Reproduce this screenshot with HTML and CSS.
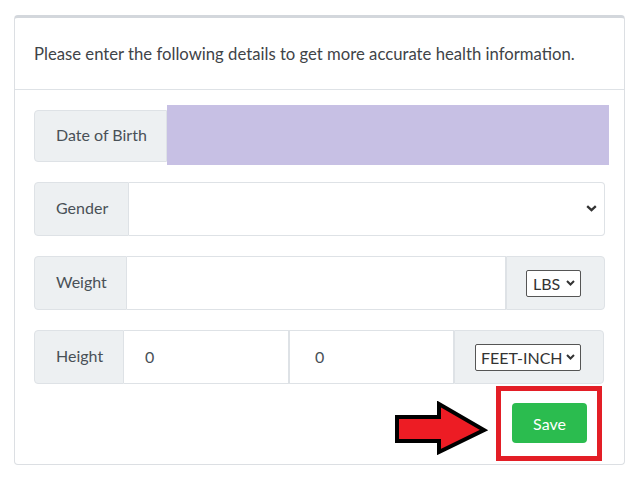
FILE: index.html
```html
<!DOCTYPE html>
<html>
<head>
<meta charset="utf-8">
<link rel="stylesheet" href="styles.css">
</head>
<body>
<div class="card">
  <div class="card-header">Please enter the following details to get more accurate health information.</div>
  <div class="card-body">
    <div class="group group-first">
      <div class="label label-dob">Date of Birth</div>
      <div class="redacted"></div>
    </div>
    <div class="group">
      <div class="label label-g">Gender</div>
      <div class="field select-field">
        <svg class="chev" width="11" height="7" viewBox="0 0 11 7"><path d="M1.2 1.2 L5.5 5.2 L9.8 1.2" fill="none" stroke="#333" stroke-width="2.3"/></svg>
      </div>
    </div>
    <div class="group">
      <div class="label label-w">Weight</div>
      <div class="field grow"></div>
      <div class="addon addon-w">
        <div class="mini-select sel-lbs">LBS<svg width="9" height="6" viewBox="0 0 9 6"><path d="M1 1 L4.5 4.5 L8 1" fill="none" stroke="#333" stroke-width="2"/></svg></div>
      </div>
    </div>
    <div class="group">
      <div class="label label-h">Height</div>
      <div class="field half">0</div>
      <div class="field half">0</div>
      <div class="addon addon-h">
        <div class="mini-select sel-fi">FEET-INCH<svg width="9" height="6" viewBox="0 0 9 6"><path d="M1 1 L4.5 4.5 L8 1" fill="none" stroke="#333" stroke-width="2"/></svg></div>
      </div>
    </div>
    <div class="actions">
      <div class="btn-wrap">
        <svg class="arrow" width="96" height="54" viewBox="0 0 96 54"><path d="M3 16 H45 V3 L90 29 L45 51 V40 H3 Z" fill="#ed1c24" stroke="#000" stroke-width="4" stroke-linejoin="miter"/></svg>
        <div class="frame"></div>
        <button class="btn">Save</button>
      </div>
    </div>
  </div>
</div>
</body>
</html>
```

FILE: styles.css
```css
* { box-sizing: border-box; }
html, body { margin: 0; background: #fff; }
body {
  padding: 15px 9px 0 14px;
  font-family: "Lato", "Open Sans", sans-serif;
  font-size: 16px;
  color: #495057;
}
.card {
  width: 611px;
  height: 450px;
  border: 1px solid #dcdfe3;
  border-top: 3px solid #d3d7dc;
  border-radius: 4px;
  background: #fff;
}
.card-header {
  height: 72px;
  display: flex;
  align-items: center;
  padding: 0 19px;
  border-bottom: 1px solid #dee2e6;
  color: #3f4448;
  font-size: 16.7px;
}
.card-body {
  padding: 20px 19px 0 19px;
}
.group {
  display: flex;
  height: 54px;
  margin-bottom: 20px;
}
.group-first { height: 52px; }
.label {
  display: flex;
  align-items: center;
  flex: none;
  padding-left: 21px;
  padding-bottom: 3px;
  background: #edf0f2;
  border: 1px solid #dee2e6;
  border-radius: 4px 0 0 4px;
  white-space: nowrap;
}
.label-dob { width: 133px; }
.label-g { width: 95px; }
.label-w { width: 93px; }
.label-h { width: 90px; }
.redacted {
  flex: 1;
  margin: -5px -4px -3px 0;
  background: #c7c0e4;
}
.field {
  display: flex;
  align-items: center;
  border: 1px solid #dee2e6;
  border-left: none;
  padding-left: 21px;
  padding-bottom: 1px;
}
.select-field {
  flex: 1;
  justify-content: flex-end;
  padding-right: 7px;
  border-radius: 0 4px 4px 0;
}
.chev { display: block; }
.grow { flex: 1; }
.half { width: 165px; }
.half + .half { border-left: 1px solid #dee2e6; padding-left: 25px; }
.addon {
  display: flex;
  align-items: center;
  justify-content: center;
  background: #edf0f2;
  border: 1px solid #dee2e6;
  border-radius: 0 4px 4px 0;
}
.addon-w { width: 99px; padding-right: 4px; }
.addon-h { width: 150px; padding-right: 2px; }
.mini-select {
  display: flex;
  align-items: center;
  justify-content: space-between;
  height: 27px;
  padding: 0 5px 0 6px;
  border: 1px solid #555;
  border-radius: 2px;
  background: #fff;
  color: #333;
}
.sel-lbs { width: 55px; }
.sel-fi { width: 106px; padding-left: 5px; }
.actions {
  display: flex;
  justify-content: flex-end;
  padding-right: 18px;
  margin-top: -1px;
}
.btn-wrap { position: relative; }
.btn {
  position: relative;
  display: block;
  width: 75px;
  height: 40px;
  border: none;
  border-radius: 4px;
  background: #2bbc4f;
  color: #fff;
  font-family: inherit;
  font-size: 16px;
}
.frame {
  position: absolute;
  left: -16px;
  top: -17px;
  right: -15px;
  bottom: -18px;
  border: 5px solid #e31e26;
}
.arrow {
  position: absolute;
  left: -118px;
  top: -2px;
}
```
